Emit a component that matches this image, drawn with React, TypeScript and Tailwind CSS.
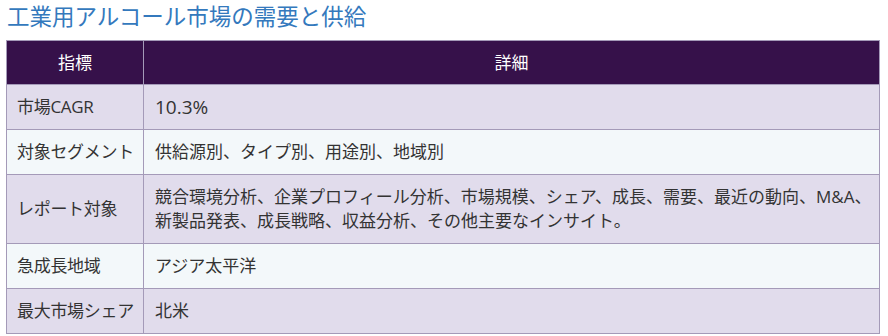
import React from 'react';

const rows: { label: string; value: string[]; big?: boolean }[] = [
  { label: '市場CAGR', value: ['10.3%'], big: true },
  { label: '対象セグメント', value: ['供給源別、タイプ別、用途別、地域別'] },
  {
    label: 'レポート対象',
    value: [
      '競合環境分析、企業プロフィール分析、市場規模、シェア、成長、需要、最近の動向、M&A、',
      '新製品発表、成長戦略、収益分析、その他主要なインサイト。',
    ],
  },
  { label: '急成長地域', value: ['アジア太平洋'] },
  { label: '最大市場シェア', value: ['北米'] },
];

export default function App() {
  return (
    <div
      className="w-[888px] h-[336px] bg-white px-[6px] overflow-hidden"
      style={{ fontFamily: '"Open Sans", "Noto Sans CJK JP", sans-serif' }}
    >
      <h2 className="text-[22.5px] leading-[34px] text-[#3479bd] pl-[1px]">
        工業用アルコール市場の需要と供給
      </h2>
      <table className="mt-[6px] w-[874px] border-collapse text-[17px] text-[#333] table-fixed">
        <thead>
          <tr className="bg-[#36114a] text-white">
            <th className="w-[137px] h-[44px] border border-[#a49ab8] font-normal text-center">指標</th>
            <th className="h-[44px] border border-[#a49ab8] font-normal text-center">詳細</th>
          </tr>
        </thead>
        <tbody>
          {rows.map((r, i) => (
            <tr key={r.label} className={i % 2 === 0 ? 'bg-[#e1dcec]' : 'bg-[#f3f8fa]'}>
              <td className="border border-[#a49ab8] pl-[10px] pr-0 py-[10px] leading-[24px] whitespace-nowrap tracking-[-0.3px]">
                {r.label}
              </td>
              <td
                className={
                  'border border-[#a49ab8] px-[11px] py-[10px] leading-[24px] whitespace-nowrap ' +
                  (r.big ? 'text-[19px]' : '')
                }
              >
                {r.value.map((v) => (
                  <div key={v}>{v}</div>
                ))}
              </td>
            </tr>
          ))}
        </tbody>
      </table>
    </div>
  );
}
